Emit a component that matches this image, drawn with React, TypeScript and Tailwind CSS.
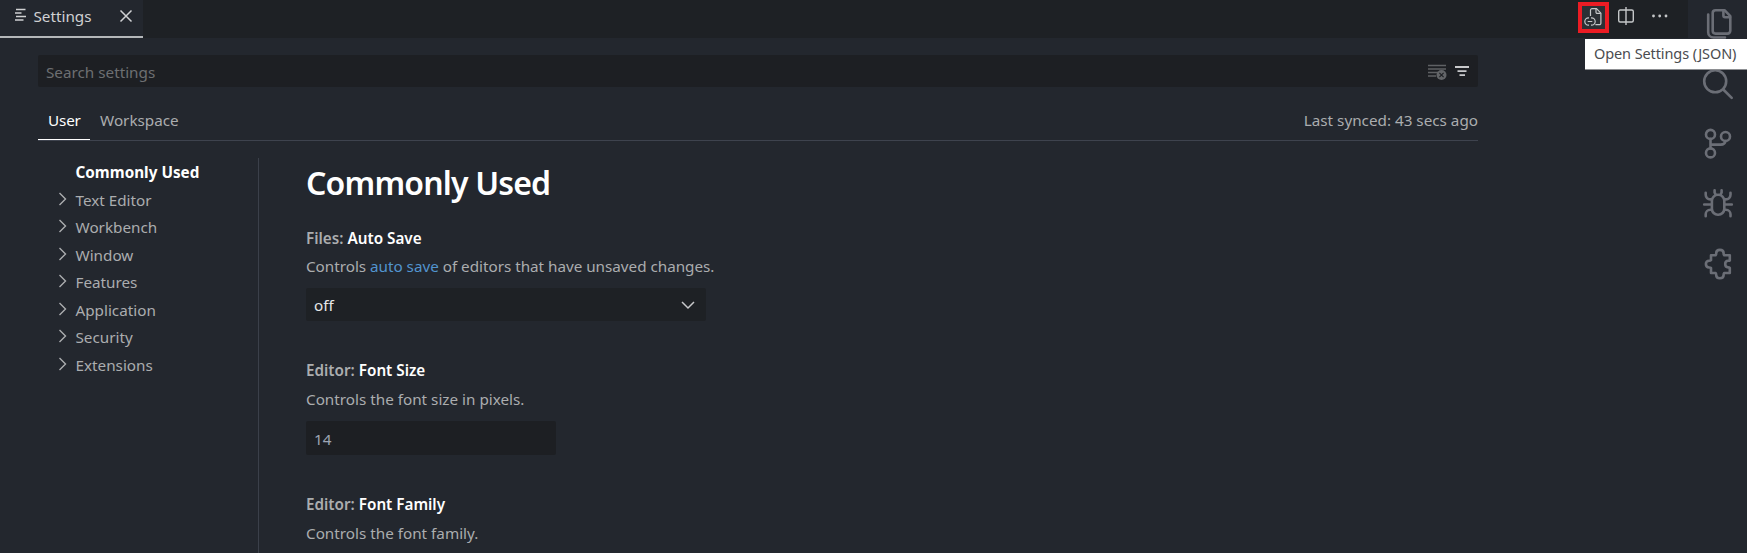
import React from "react";

const categories = ["Text Editor", "Workbench", "Window", "Features", "Application", "Security", "Extensions"];

function ActivityIcon({ label, children }: { label: string; children: React.ReactNode }) {
  return (
    <button aria-label={label} className="block h-8 w-8">
      <svg
        width="32"
        height="32"
        viewBox="0 0 32 32"
        fill="none"
        stroke="currentColor"
        strokeWidth="2.6"
        strokeLinecap="round"
        strokeLinejoin="round"
      >
        {children}
      </svg>
    </button>
  );
}

function ActivityBar() {
  return (
    <aside className="flex w-[59px] shrink-0 flex-col gap-7 bg-[#23272e] pt-2 pl-3.5 text-[#6b6e76]">
      <ActivityIcon label="Explorer">
        <path d="M13.5 2.2h9l5.8 6v14.6a2.8 2.8 0 0 1-2.8 2.8h-12a2.8 2.8 0 0 1-2.8-2.8V5a2.8 2.8 0 0 1 2.8-2.8z" />
        <path d="M21.4 2.6v5a1.6 1.6 0 0 0 1.6 1.6h5" />
        <path d="M6.2 6.5v17.7a5.3 5.3 0 0 0 5.3 5.3H23" />
      </ActivityIcon>
      <ActivityIcon label="Search">
        <circle cx="13.2" cy="13.3" r="11" />
        <path d="M21.3 21.5l8.4 8.4" />
      </ActivityIcon>
      <ActivityIcon label="Source Control">
        <circle cx="8.5" cy="6.4" r="4.5" />
        <circle cx="8.5" cy="24.9" r="4.5" />
        <circle cx="23.5" cy="8.5" r="4.5" />
        <path d="M8.5 11v9.3M23.5 13.1c-.6 2.4-2.2 3.5-4.6 3.5H8.5" />
      </ActivityIcon>
      <ActivityIcon label="Debug">
        <rect x="9.9" y="6.8" width="12.4" height="20" rx="6" />
        <path d="M2.2 16.5h7.2M22.8 16.5h7" />
        <path d="M3.7 4.8v2a4.6 4.6 0 0 0 4.6 4.6h1.4M28.5 4.800v2a4.6 4.6 0 0 1-4.6 4.6h-1.400" />
        <path d="M3.7 28.2v-1.900a4.6 4.6 0 0 1 4.6-4.6h1.400M28.5 28.200v-1.900a4.600 4.600 0 0 0-4.600-4.600h-1.400" />
        <path d="M12.600 2.300v2.100l1 2.200M19.600 2.300v2.100l-1 2.200" />
      </ActivityIcon>
      <ActivityIcon label="Extensions">
        <path d="M9 7.2h4.6c.6-.5.6-1.3.6-2 0-2 1.5-3.3 3.7-3.3s3.7 1.3 3.7 3.3c0 .7 0 1.5.6 2h5.6v5.2c-.4.5-1 .4-1.6.4-1.8 0-3 1.4-3 3.3s1.2 3.3 3 3.3c.6 0 1.2 0 1.6.4v5.2h-5.6c-.6.5-.6 1.3-.6 2 0 2-1.5 3.3-3.7 3.3s-3.7-1.3-3.7-3.3c0-.7 0-1.5-.6-2H9v-5c-.5-.5-1.2-.5-1.9-.5-2 0-3.2-1.4-3.2-3.4s1.2-3.4 3.2-3.4c.7 0 1.4 0 1.9-.5z" />
      </ActivityIcon>
    </aside>
  );
}

function TabBar() {
  return (
    <header className="flex h-[38px] justify-between bg-[#1e2125]">
      <div className="flex w-[143px] items-center border-b-2 border-[#b4b7b9] bg-[#23272e] pl-3.5 text-[#d0d1d3]">
        <svg width="14" height="16" viewBox="0 0 14 16" className="-mt-1.5 shrink-0" fill="none" stroke="currentColor" strokeWidth="1.4">
          <path d="M2 2.5h9.5M1 6h6.5M2 9.5h10M1 13h8.5" />
        </svg>
        <span className="-mt-[5px] ml-[5.5px]">Settings</span>
        <svg width="14" height="14" viewBox="0 0 14 14" className="-mt-1 ml-[27px] shrink-0" fill="none" stroke="currentColor" strokeWidth="1.5">
          <path d="M1.5 1.5l11 11M12.5 1.5l-11 11" />
        </svg>
      </div>
      <div className="flex items-start pr-[18px] text-[#c5c7c9]">
        <button aria-label="Open Settings (JSON)" className="mt-0.5 flex h-[31px] w-[31px] items-center justify-center border-4 border-[#ec1c24] bg-[#2c3035]">
          <svg width="23" height="23" viewBox="0 0 23 23" className="shrink-0" fill="none" stroke="currentColor" strokeWidth="1.2">
            <path d="M8.5 10V4.2A1.5 1.5 0 0 1 10 2.7h4.5l4.4 4.5v10a1.5 1.5 0 0 1-1.5 1.5h-4" />
            <path d="M14 2.8v3.4a1.2 1.2 0 0 0 1.2 1.2h3.5" />
            <path d="M7 11.8h-.5a3.7 3.7 0 0 0 0 7.4H7M9 11.8h.5a3.7 3.7 0 0 1 0 7.4H9M5.7 15.5h4.6" />
          </svg>
        </button>
        <svg width="20" height="20" viewBox="0 0 20 20" className="mt-1.5 ml-[7px]" fill="none" stroke="currentColor" strokeWidth="1.4">
          <path d="M7.5 4H4.200a1.500 1.500 0 0 0-1.500 1.500v9A1.500 1.500 0 0 0 4.200 16h3.300M12.500 4h3.300a1.500 1.500 0 0 1 1.500 1.500v9a1.500 1.500 0 0 1-1.500 1.500h-3.300M7 4h6M7 16h6M10 1v18" />
        </svg>
        <svg width="20" height="20" viewBox="0 0 20 20" className="mt-1.5 ml-3.5" fill="currentColor">
          <circle cx="3.5" cy="10" r="1.4" />
          <circle cx="9.7" cy="10" r="1.4" />
          <circle cx="16" cy="10" r="1.4" />
        </svg>
      </div>
    </header>
  );
}

function SearchBox() {
  return (
    <div className="flex h-8 items-center justify-between rounded-[2px] bg-[#1d1f23] pr-[8px] pl-2">
      <span className="pt-0.5 text-[#6d6f72]">Search settings</span>
      <div className="flex items-center">
        <svg width="20" height="18" viewBox="0 0 20 18" fill="none">
          <path d="M1 3.5h18M1 7h18M1 10.5h10M1 14h8" stroke="#5f6164" strokeWidth="1.3" />
          <circle cx="14.5" cy="13" r="5" fill="#636568" />
          <path d="M12.4 10.9l4.2 4.2M16.6 10.9l-4.2 4.2" stroke="#1d1f23" strokeWidth="1.1" />
        </svg>
        <svg width="16" height="16" viewBox="0 0 16 16" className="ml-[7px]" fill="#c8c9cb">
          <path d="M1 3h14v2H1zM3.5 7.300h9v1.800h-9zM5.500 11.300h5.500v1.800H5.500z" />
        </svg>
      </div>
    </div>
  );
}

function Tree() {
  return (
    <nav className="w-[221px] shrink-0 border-r border-[#3b404a] pt-px leading-[27.5px] text-[#abadaf]">
      <div className="pl-[37.5px] font-bold tracking-[0.02px] text-white">Commonly Used</div>
      {categories.map((name) => (
        <div key={name} className="flex items-center pl-[20px]">
          <svg width="9" height="14" viewBox="0 0 9 14" className="-mt-[3px]" fill="none" stroke="currentColor" strokeWidth="1.4">
            <path d="M1.5 1l6 6-6 6" />
          </svg>
          <span className="ml-[8.5px]">{name}</span>
        </div>
      ))}
    </nav>
  );
}

function SettingTitle({ group, name }: { group: string; name: string }) {
  return (
    <h2 className="leading-6 font-semibold text-[#abadaf]">
      {group}: <span className="text-white">{name}</span>
    </h2>
  );
}

export default function App() {
  return (
    <div className="relative flex h-[553px] w-[1747px] overflow-hidden bg-[#23272e] font-['Noto_Sans','Open_Sans',sans-serif] text-[15.25px] leading-6 text-[#abadaf]">
      <div className="flex min-w-0 flex-1 flex-col">
        <TabBar />
        <main className="flex min-h-0 w-[1478px] flex-1 flex-col pt-[17px] pl-[38px]">
          <SearchBox />
          <div className="mt-[18px] flex h-9 shrink-0 items-stretch border-b border-[#3e434e]">
            <div className="w-[52px] border-b border-white pt-[3px] pl-2.5 tracking-[-0.15px] text-white">User</div>
            <div className="pt-[3px] pl-2.5">Workspace</div>
            <div className="ml-auto pt-[3px]">Last synced: 43 secs ago</div>
          </div>
          <div className="mt-[17px] flex min-h-0 flex-1">
            <Tree />
            <div className="pl-[47px]">
              <h1 className="mt-px text-[32px] leading-[48px] font-semibold tracking-[-0.83px] text-white">Commonly Used</h1>
              <section className="mt-[19px]">
                <SettingTitle group="Files" name="Auto Save" />
                <p className="mt-1 leading-6 tracking-[-0.02px]">
                  Controls <a className="text-[#5294cf]">auto save</a> of editors that have unsaved changes.
                </p>
                <div className="mt-[10px] flex h-[33px] w-[400px] items-center justify-between rounded-[2px] bg-[#1e2125] pr-[11px] pl-2 text-[#e6e7e8]">
                  <span>off</span>
                  <svg width="14" height="10" viewBox="0 0 14 10" fill="none" stroke="#c8c9cb" strokeWidth="1.5">
                    <path d="M1 2l6 6 6-6" />
                  </svg>
                </div>
              </section>
              <section className="mt-[37px]">
                <SettingTitle group="Editor" name="Font Size" />
                <p className="mt-[5px] leading-6">Controls the font size in pixels.</p>
                <div className="mt-[10px] h-[34px] w-[250px] rounded-[2px] bg-[#1d1f23] pt-1.5 pl-2 text-[#9da5b4]">14</div>
              </section>
              <section className="mt-[37px]">
                <SettingTitle group="Editor" name="Font Family" />
                <p className="mt-[5px] leading-6">Controls the font family.</p>
              </section>
            </div>
          </div>
        </main>
      </div>
      <ActivityBar />
      <div
        role="tooltip"
        className="absolute top-[39px] right-0 h-[31px] w-[162px] border-b border-[#8d8f92] bg-white pl-[9px] text-[14.5px] leading-[29px] tracking-[-0.1px] whitespace-nowrap text-[#4a4c50]"
      >
        Open Settings (JSON)
      </div>
    </div>
  );
}
